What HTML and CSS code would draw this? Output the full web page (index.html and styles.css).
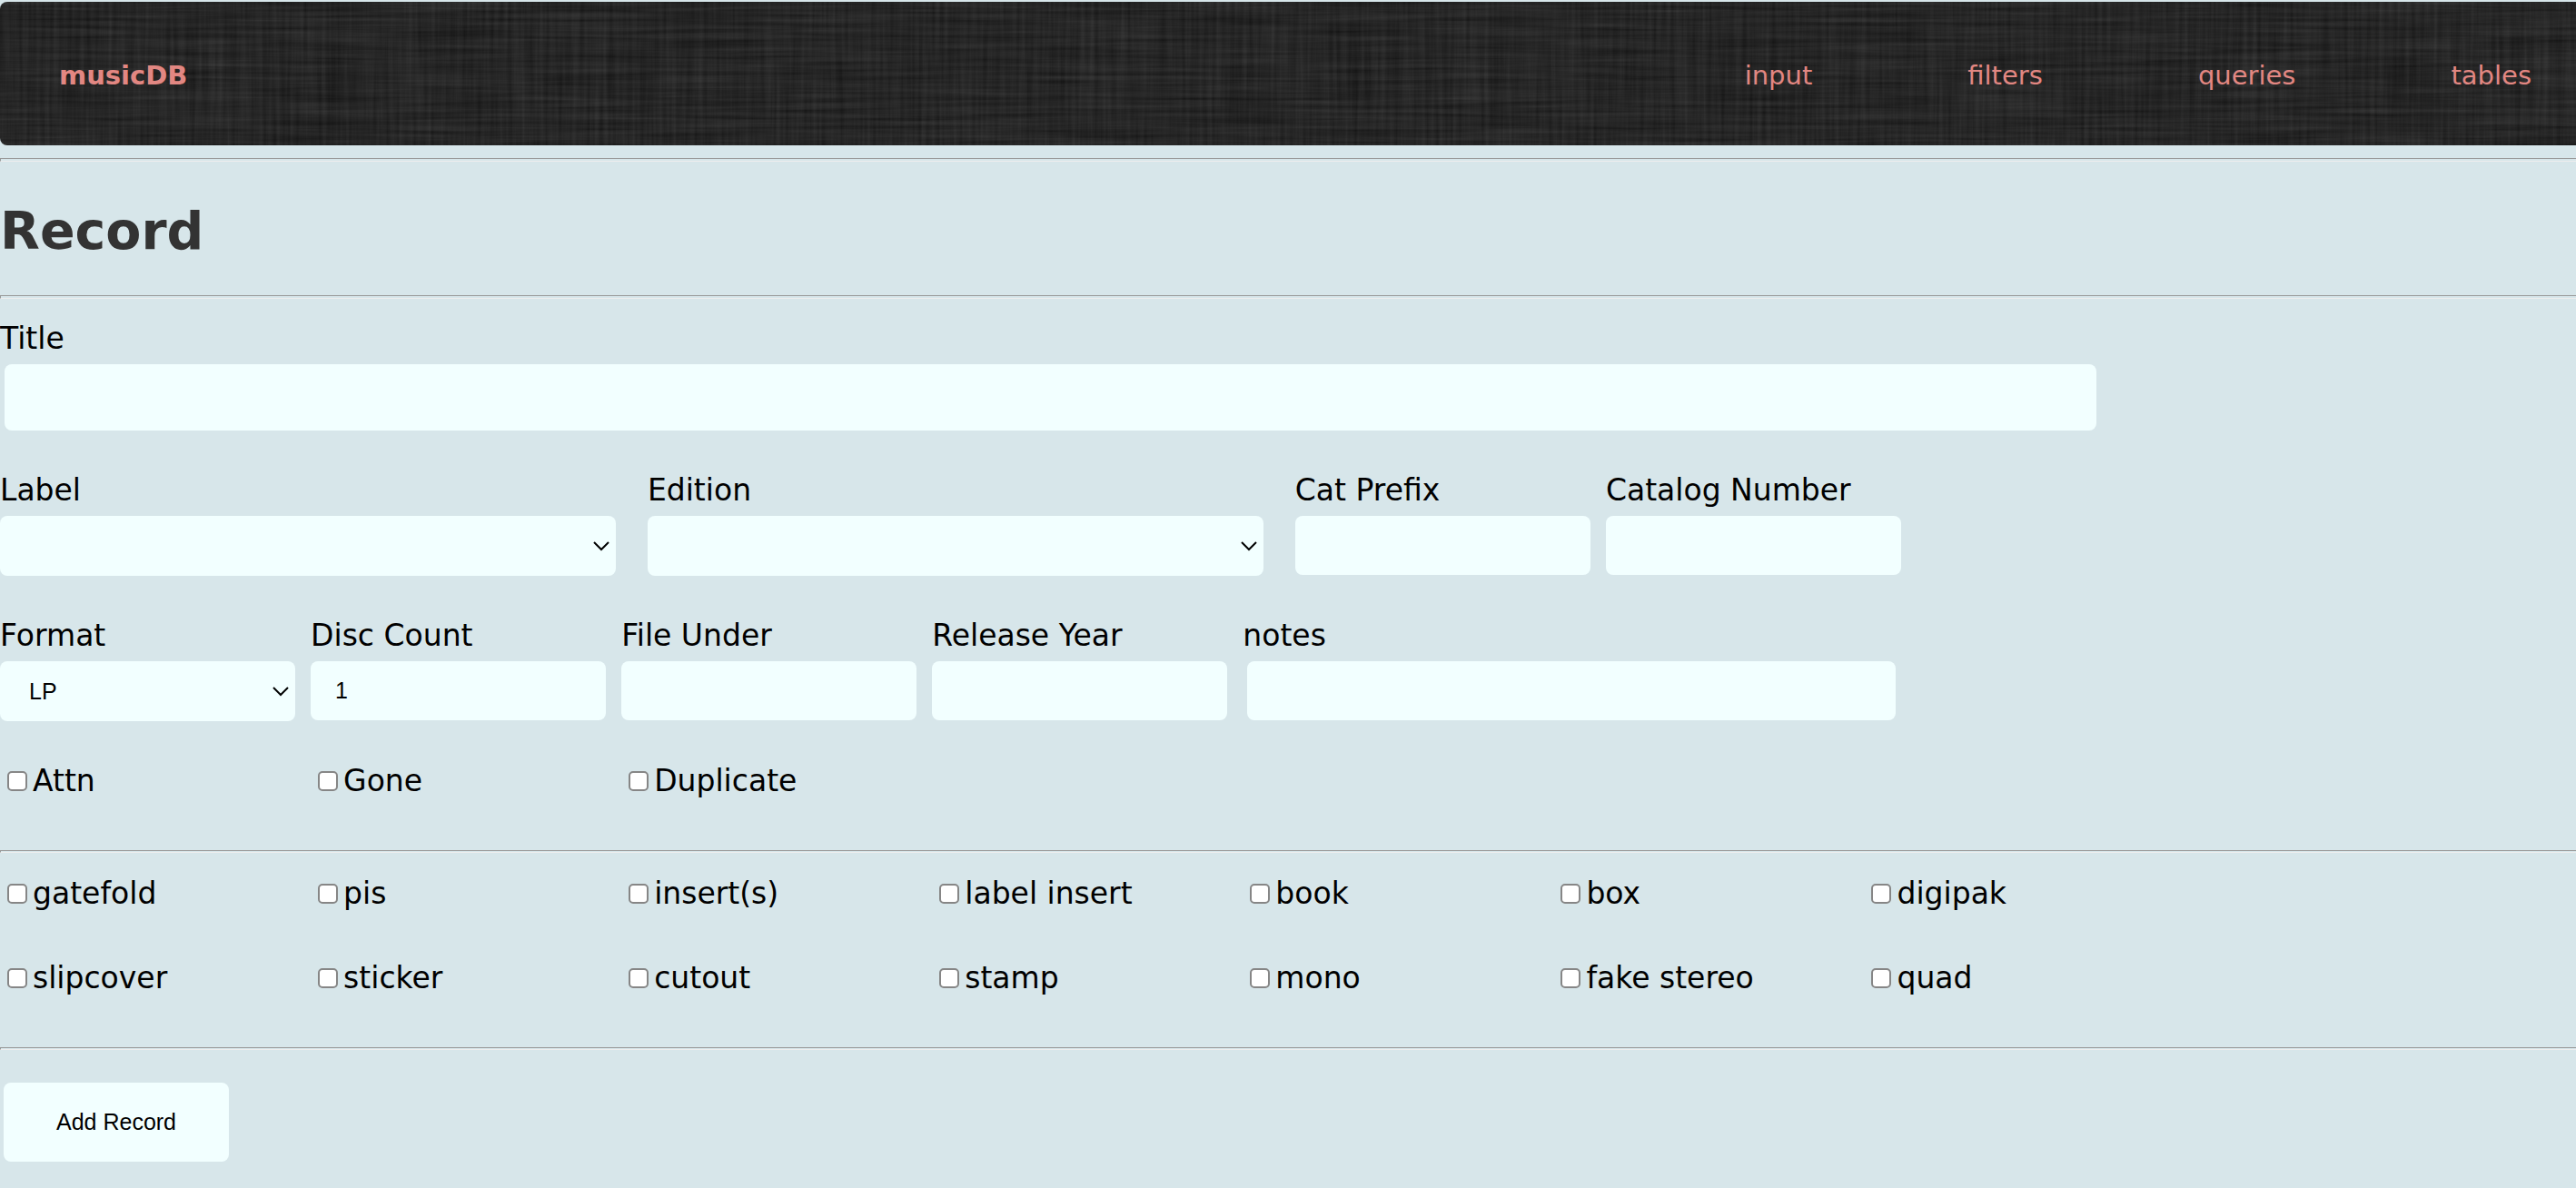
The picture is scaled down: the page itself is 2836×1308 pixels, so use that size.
FILE: index.html
```html
<!DOCTYPE html>
<html lang="en">
<head>
<meta charset="utf-8">
<meta name="viewport" content="width=device-width, initial-scale=1">
<title>musicDB</title>
<link rel="stylesheet" href="styles.css">
</head>
<body>
<header class="site-header">
  <a class="brand" href="#">musicDB</a>
  <nav class="site-nav">
    <a href="#">input</a>
    <a href="#">filters</a>
    <a href="#">queries</a>
    <a href="#">tables</a>
  </nav>
</header>
<hr class="rule">
<main>
  <h1 class="page-title">Record</h1>
  <hr class="rule">
  <form class="record-form">
    <div class="rows">
      <div class="row">
        <div class="field field-full inset">
          <label for="title">Title</label>
          <input class="control tall" type="text" id="title">
        </div>
      </div>
      <div class="row">
        <div class="field field-wide">
          <label for="label">Label</label>
          <select class="control" id="label"><option></option></select>
        </div>
        <div class="field field-wide">
          <label for="edition">Edition</label>
          <select class="control" id="edition"><option></option></select>
        </div>
        <div class="field">
          <label for="prefix">Cat Prefix</label>
          <input class="control" type="text" id="prefix">
        </div>
        <div class="field">
          <label for="catalog">Catalog Number</label>
          <input class="control" type="text" id="catalog">
        </div>
      </div>
      <div class="row">
        <div class="field">
          <label for="format">Format</label>
          <select class="control" id="format"><option>LP</option></select>
        </div>
        <div class="field">
          <label for="discs">Disc Count</label>
          <input class="control" type="text" id="discs" value="1">
        </div>
        <div class="field">
          <label for="under">File Under</label>
          <input class="control" type="text" id="under">
        </div>
        <div class="field">
          <label for="year">Release Year</label>
          <input class="control" type="text" id="year">
        </div>
        <div class="field field-notes inset">
          <label for="notes">notes</label>
          <input class="control" type="text" id="notes">
        </div>
      </div>
      <div class="row">
        <label class="check"><input type="checkbox">Attn</label>
        <label class="check"><input type="checkbox">Gone</label>
        <label class="check"><input type="checkbox">Duplicate</label>
      </div>
    </div>
    <hr class="rule thin">
    <div class="rows checks">
      <div class="row">
        <label class="check"><input type="checkbox">gatefold</label>
        <label class="check"><input type="checkbox">pis</label>
        <label class="check"><input type="checkbox">insert(s)</label>
        <label class="check"><input type="checkbox">label insert</label>
        <label class="check"><input type="checkbox">book</label>
        <label class="check"><input type="checkbox">box</label>
        <label class="check"><input type="checkbox">digipak</label>
      </div>
      <div class="row">
        <label class="check"><input type="checkbox">slipcover</label>
        <label class="check"><input type="checkbox">sticker</label>
        <label class="check"><input type="checkbox">cutout</label>
        <label class="check"><input type="checkbox">stamp</label>
        <label class="check"><input type="checkbox">mono</label>
        <label class="check"><input type="checkbox">fake stereo</label>
        <label class="check"><input type="checkbox">quad</label>
      </div>
    </div>
    <hr class="rule thin">
    <button class="submit" type="submit">Add Record</button>
  </form>
</main>
</body>
</html>
```
FILE: styles.css
```css
* {
  box-sizing: border-box;
}

body {
  margin: 0;
  padding-top: 2px;
  background: #d7e6ea;
  color: #000;
  font-family: Verdana, "DejaVu Sans", sans-serif;
  font-size: 33px;
  line-height: 40px;
}

/* Header with a woven dark linen texture */
.site-header {
  display: flex;
  align-items: center;
  justify-content: space-between;
  padding: 61px 49px 57px 65px;
  border-radius: 8px 0 0 8px;
  background-color: #262626;
  background-image: url("data:image/svg+xml,%3Csvg xmlns='http://www.w3.org/2000/svg' width='2836' height='158'%3E%3Cfilter id='w' x='0' y='0' width='100%25' height='100%25' color-interpolation-filters='sRGB'%3E%3CfeTurbulence type='fractalNoise' baseFrequency='0.007 0.22' numOctaves='3' seed='4'/%3E%3CfeColorMatrix values='.11 0 0 0 .02 .11 0 0 0 .02 .11 0 0 0 .02 0 0 0 0 1' result='h'/%3E%3CfeTurbulence type='fractalNoise' baseFrequency='0.2 0.007' numOctaves='3' seed='9'/%3E%3CfeColorMatrix values='.09 0 0 0 .03 .09 0 0 0 .03 .09 0 0 0 .03 0 0 0 0 1' result='v'/%3E%3CfeComposite in='h' in2='v' operator='arithmetic' k2='1' k3='1'/%3E%3C/filter%3E%3Crect width='100%25' height='100%25' filter='url(%23w)'/%3E%3C/svg%3E");
  font-size: 29px;
}

.site-header a {
  color: #e28782;
  text-decoration: none;
}

.brand {
  font-weight: bold;
}

.site-nav {
  display: flex;
  gap: 171px;
}

.rule {
  height: 4px;
  margin: 0;
  border: 1px solid #999;
  border-right: 0;
  border-bottom-color: #eee;
}

.rule.thin {
  height: 3px;
}

.site-header + .rule {
  margin-top: 14px;
}

.page-title {
  margin: 40px 0 35px;
  color: #333;
  font-size: 57px;
  line-height: 72px;
}

.rows {
  display: flex;
  flex-direction: column;
  gap: 46px;
  padding: 24px 0 56px;
}

.rows.checks {
  gap: 53px;
  padding-top: 25px;
}

.row {
  display: flex;
  align-items: flex-start;
  width: 96.5%;
}

.field,
.check {
  flex: none;
  width: 12.5%;
  padding-right: 17px;
}

.field {
  display: flex;
  flex-direction: column;
  gap: 8px;
}

.field-wide {
  width: 26.05%;
  padding-right: 35px;
}

.field-full {
  width: 84.35%;
  padding-right: 0;
}

.field-notes {
  width: 26.25%;
  padding-right: 0;
}

.inset .control {
  align-self: stretch;
  width: auto;
  margin-left: 5px;
}

.control {
  width: 100%;
  height: 65px;
  padding: 0 27px;
  border: 0;
  border-radius: 8px;
  background-color: #f2ffff;
  color: #000;
  font-family: Arial, "Liberation Sans", sans-serif;
  font-size: 25px;
}

.control.tall {
  height: 73px;
}

select.control {
  height: 66px;
  padding: 0 32px;
  appearance: none;
  background-image: url("data:image/svg+xml,%3Csvg xmlns='http://www.w3.org/2000/svg' width='18' height='11' fill='none' stroke='%23000' stroke-width='2'%3E%3Cpath d='M1 1l8 8 8-8'/%3E%3C/svg%3E");
  background-repeat: no-repeat;
  background-position: right 7px center;
}

.check {
  display: flex;
  align-items: center;
  gap: 6px;
  padding-left: 8px;
  white-space: nowrap;
}

.check input {
  width: 22px;
  height: 22px;
  margin: 0;
  appearance: none;
  border: 2px solid #868686;
  border-radius: 5px;
  background: #fff;
}

.check input:checked {
  background: #0075ff;
}

.submit {
  display: block;
  margin: 36px 4px 27px;
  padding: 23px 58px;
  border: 0;
  border-radius: 8px;
  background: #f2ffff;
  color: #000;
  font-family: Arial, "Liberation Sans", sans-serif;
  font-size: 25px;
  line-height: 41px;
}
```
